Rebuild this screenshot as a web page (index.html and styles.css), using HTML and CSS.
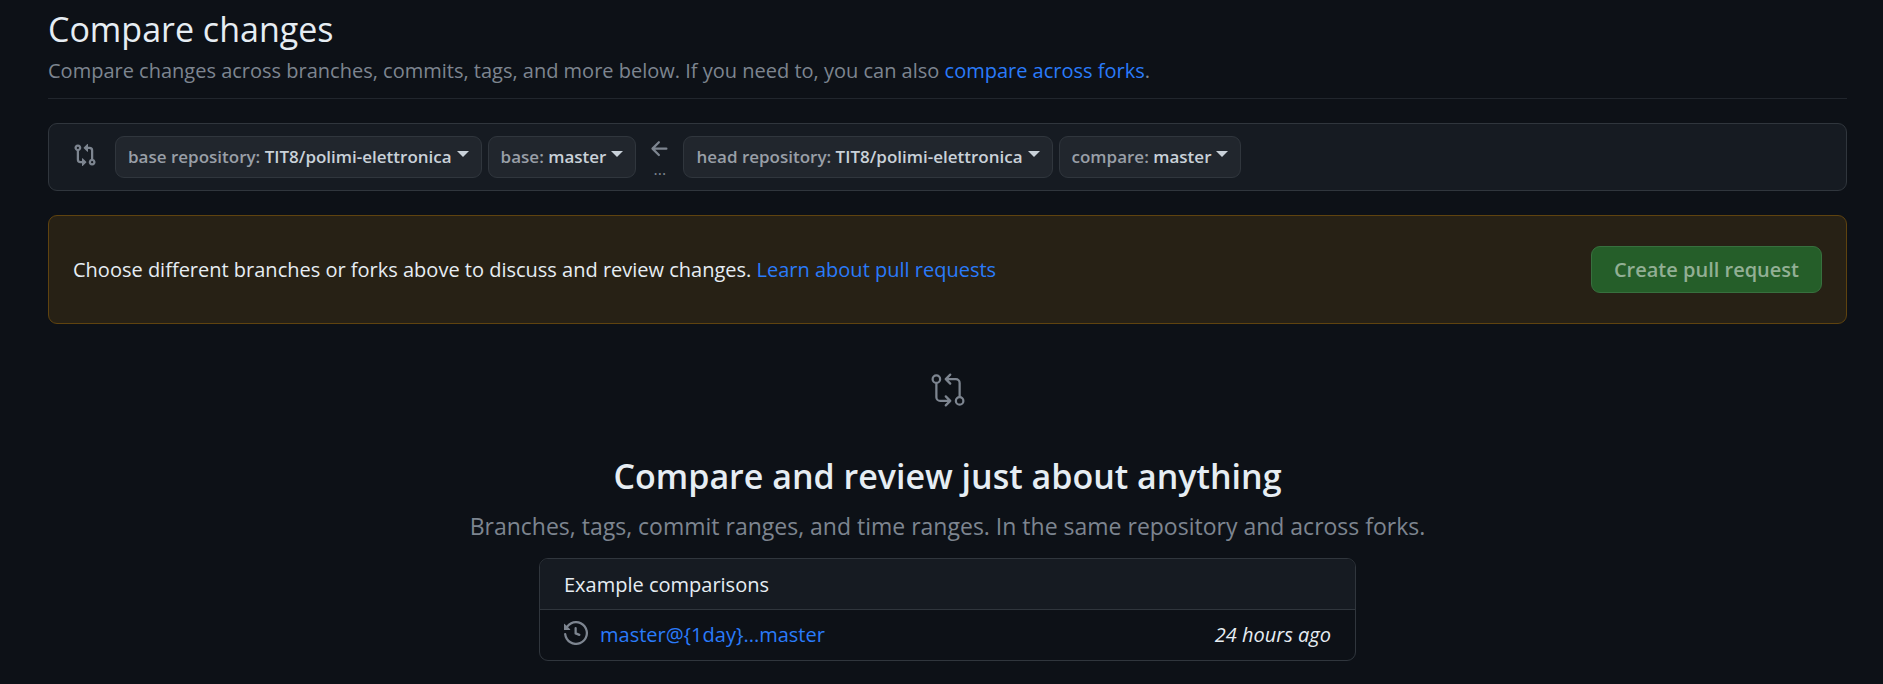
FILE: index.html
```html
<!DOCTYPE html>
<html lang="en">
<head>
<meta charset="utf-8">
<meta name="viewport" content="width=device-width, initial-scale=1">
<title>Compare changes</title>
<link rel="stylesheet" href="styles.css">
</head>
<body>
<main class="page">
  <header class="subhead">
    <h1 class="subhead-title">Compare changes</h1>
    <p class="subhead-text">Compare changes across branches, commits, tags, and more below. If you need to, you can also <a class="link" href="#">compare across forks</a>.</p>
  </header>

  <section class="range" aria-label="Comparison range">
    <svg class="icon range-icon" viewBox="0 0 16 16" aria-hidden="true"><path d="M9.573.677A.25.25 0 0 1 10 .854V2.5h1A2.5 2.5 0 0 1 13.5 5v5.628a2.251 2.251 0 1 1-1.5 0V5a1 1 0 0 0-1-1h-1v1.646a.25.25 0 0 1-.427.177L7.177 3.427a.25.25 0 0 1 0-.354L9.573.677ZM6 12v-1.646a.25.25 0 0 1 .427-.177l2.396 2.396a.25.25 0 0 1 0 .354l-2.396 2.396A.25.25 0 0 1 6 15.146V13.5H5A2.5 2.5 0 0 1 2.5 11V5.372a2.25 2.25 0 1 1 1.5 0V11a1 1 0 0 0 1 1h1ZM4 3.25a.75.75 0 1 0-1.5 0 .75.75 0 0 0 1.5 0ZM12.75 12a.75.75 0 1 0 0 1.5.75.75 0 0 0 0-1.5Z"/></svg>
    <div class="pickers">
      <button class="picker" type="button"><span>base repository: <b class="picker-value">TIT8/polimi-elettronica</b></span><span class="caret"></span></button>
      <button class="picker" type="button"><span>base: <b class="picker-value">master</b></span><span class="caret"></span></button>
    </div>
    <div class="direction">
      <svg class="icon" viewBox="0 0 16 16" aria-hidden="true"><path d="M7.78 12.53a.75.75 0 0 1-1.06 0L2.47 8.28a.75.75 0 0 1 0-1.06l4.25-4.25a.751.751 0 0 1 1.042.018.751.751 0 0 1 .018 1.042L4.81 7h7.44a.75.75 0 0 1 0 1.5H4.81l2.97 2.97a.75.75 0 0 1 0 1.06Z"/></svg>
      <span class="dots">...</span>
    </div>
    <div class="pickers">
      <button class="picker" type="button"><span>head repository: <b class="picker-value">TIT8/polimi-elettronica</b></span><span class="caret"></span></button>
      <button class="picker" type="button"><span>compare: <b class="picker-value">master</b></span><span class="caret"></span></button>
    </div>
  </section>

  <section class="notice">
    <p class="notice-text">Choose different branches or forks above to discuss and review changes. <a class="link" href="#">Learn about pull requests</a></p>
    <button class="create" type="button" disabled>Create pull request</button>
  </section>

  <section class="blank">
    <svg class="blank-icon" viewBox="0 0 24 24" aria-hidden="true">
      <circle cx="4.25" cy="4.75" r="2.5"/>
      <circle cx="19.75" cy="19.25" r="2.5"/>
      <path d="M4.25 7.5v9.25a2.5 2.5 0 0 0 2.5 2.5H13.5M10.5 16.25l3 3-3 3M19.75 16.5V7.25a2.5 2.5 0 0 0-2.5-2.5H10.5M13.5 1.75l-3 3 3 3"/>
    </svg>
    <h2 class="blank-title">Compare and review just about anything</h2>
    <p class="blank-text">Branches, tags, commit ranges, and time ranges. In the same repository and across forks.</p>
    <div class="examples">
      <h3 class="examples-title">Example comparisons</h3>
      <div class="example">
        <svg class="icon" viewBox="0 0 16 16" aria-hidden="true"><path d="m.427 1.927 1.215 1.215a8.002 8.002 0 1 1-1.6 5.685.75.75 0 1 1 1.493-.154 6.5 6.5 0 1 0 1.18-4.458l1.358 1.358A.25.25 0 0 1 3.896 6H.25A.25.25 0 0 1 0 5.75V2.104a.25.25 0 0 1 .427-.177ZM7.75 4a.75.75 0 0 1 .75.75v2.992l2.028.812a.75.75 0 0 1-.557 1.392l-2.5-1A.751.751 0 0 1 7 8.25v-3.5A.75.75 0 0 1 7.75 4Z"/></svg>
        <a class="link" href="#">master@{1day}...master</a>
        <em class="example-time">24 hours ago</em>
      </div>
    </div>
  </section>
</main>
</body>
</html>
```
FILE: styles.css
```css
* {
  box-sizing: border-box;
}

body {
  margin: 0;
  background: #0d1117;
  color: #e6edf3;
  font: 20px/32px "Segoe UI", "Open Sans", sans-serif;
}

h1, h2, h3, p {
  margin: 0;
}

.page {
  display: flex;
  flex-direction: column;
  gap: 24px;
  padding: 3px 36px 0 48px;
}

.link {
  color: #2a7bfa;
  text-decoration: none;
}

.subhead {
  padding-bottom: 11px;
  border-bottom: 1px solid #21262d;
}

.subhead-title {
  font-size: 34px;
  font-weight: 400;
  line-height: 52px;
}

.subhead-text {
  color: #7d8590;
}

.icon {
  flex: none;
  width: 24px;
  height: 24px;
  fill: #7d8590;
}

.range {
  display: flex;
  align-items: center;
  padding: 12px 24px;
  border: 1px solid #30363d;
  border-radius: 9px;
  background: #161b22;
}

.range-icon {
  margin: 0 18px 4px 0;
}

.pickers {
  display: flex;
  gap: 6px;
}

.picker {
  display: flex;
  gap: 5px;
  padding: 5px 12px;
  border: 1px solid #30363d;
  border-radius: 9px;
  background: #21262d;
  color: #999fa7;
  font: 600 17px/30px "Segoe UI", "Open Sans", sans-serif;
}

.picker-value {
  color: #c9d1d9;
  font-weight: 600;
}

.caret {
  margin-top: 9px;
  border: 6px solid transparent;
  border-top-color: #c9d1d9;
  border-bottom: 0;
  align-self: flex-start;
}

.direction {
  display: flex;
  flex-direction: column;
  align-items: center;
  width: 47px;
  color: #7d8590;
}

.dots {
  font-size: 16px;
  line-height: 16px;
}

.notice {
  display: flex;
  align-items: center;
  justify-content: space-between;
  padding: 30px 24px;
  border: 1px solid #5f430f;
  border-radius: 9px;
  background: #272115;
}

.create {
  padding: 6px 22px;
  border: 1px solid #37703e;
  border-radius: 9px;
  background: #255e29;
  color: #92af94;
  font: 600 20px/33px "Segoe UI", "Open Sans", sans-serif;
}

.blank {
  display: flex;
  flex-direction: column;
  align-items: center;
  padding-top: 24px;
}

.blank-icon {
  width: 36px;
  height: 36px;
  fill: none;
  stroke: #7d8590;
  stroke-width: 1.5;
  stroke-linecap: round;
  stroke-linejoin: round;
}

.blank-title {
  margin-top: 41px;
  font-size: 34px;
  font-weight: 600;
  line-height: 54px;
}

.blank-text {
  margin-top: 5px;
  color: #7d8590;
  font-size: 23px;
  line-height: 36px;
}

.examples {
  width: 817px;
  max-width: 100%;
  margin-top: 14px;
  border: 1px solid #30363d;
  border-radius: 9px;
  overflow: hidden;
}

.examples-title {
  padding: 10px 24px 8px;
  border-bottom: 1px solid #30363d;
  background: #161b22;
  font-size: 20px;
  font-weight: 400;
}

.example {
  display: flex;
  align-items: center;
  gap: 12px;
  padding: 9px 24px;
}

.example .icon {
  margin-bottom: 4px;
}

.example-time {
  margin-left: auto;
}
```
